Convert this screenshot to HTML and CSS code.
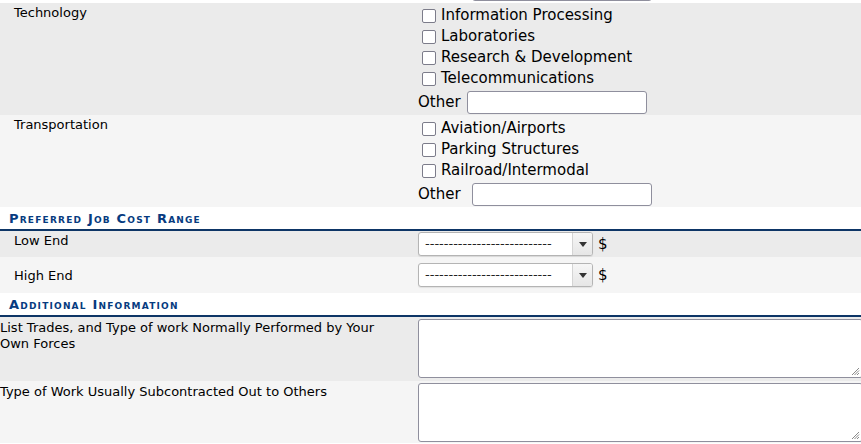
FILE: index.html
```html
<!DOCTYPE html>
<html>
<head>
<meta charset="utf-8">
<link rel="stylesheet" href="styles.css">
</head>
<body>
<div class="page">
  <div class="prev-strip"><input class="text-input prev-input" type="text"></div>

  <div class="row row-dark row-tech">
    <div class="label">Technology</div>
    <div class="field">
      <div class="check"><input type="checkbox" class="cb"><span>Information Processing</span></div>
      <div class="check"><input type="checkbox" class="cb"><span>Laboratories</span></div>
      <div class="check"><input type="checkbox" class="cb"><span>Research &amp; Development</span></div>
      <div class="check"><input type="checkbox" class="cb"><span>Telecommunications</span></div>
      <div class="other"><span>Other</span><input class="text-input other-input" type="text"></div>
    </div>
  </div>

  <div class="row row-light row-transport">
    <div class="label">Transportation</div>
    <div class="field">
      <div class="check"><input type="checkbox" class="cb"><span>Aviation/Airports</span></div>
      <div class="check"><input type="checkbox" class="cb"><span>Parking Structures</span></div>
      <div class="check"><input type="checkbox" class="cb"><span>Railroad/Intermodal</span></div>
      <div class="other"><span>Other</span><input class="text-input other-input other-wide" type="text"></div>
    </div>
  </div>

  <div class="section-head">Preferred Job Cost Range</div>

  <div class="row row-dark row-low">
    <div class="label">Low End</div>
    <div class="field field-inline">
      <div class="select"><span class="select-text">---------------------------</span><span class="select-arrow"><svg width="8" height="5" viewBox="0 0 8 5"><path d="M0 0H8L4 5Z" fill="#333"/></svg></span></div>
      <span class="dollar">$</span>
    </div>
  </div>

  <div class="row row-light row-high">
    <div class="label">High End</div>
    <div class="field field-inline">
      <div class="select"><span class="select-text">---------------------------</span><span class="select-arrow"><svg width="8" height="5" viewBox="0 0 8 5"><path d="M0 0H8L4 5Z" fill="#333"/></svg></span></div>
      <span class="dollar">$</span>
    </div>
  </div>

  <div class="section-head">Additional Information</div>

  <div class="row row-dark row-area">
    <div class="label label-flush">List Trades, and Type of work Normally Performed by Your Own Forces</div>
    <div class="field"><div class="area-wrap"><textarea class="area"></textarea><svg class="grip" width="10" height="10" viewBox="0 0 10 10"><path d="M9 2L2 9M9 4.5L4.5 9M9 7L7 9" stroke="#8a8a8a" stroke-width="1"/></svg></div></div>
  </div>

  <div class="row row-light row-area">
    <div class="label label-flush">Type of Work Usually Subcontracted Out to Others</div>
    <div class="field"><div class="area-wrap"><textarea class="area"></textarea><svg class="grip" width="10" height="10" viewBox="0 0 10 10"><path d="M9 2L2 9M9 4.5L4.5 9M9 7L7 9" stroke="#8a8a8a" stroke-width="1"/></svg></div></div>
  </div>
</div>
</body>
</html>
```

FILE: styles.css
```css
html, body {
  margin: 0;
  padding: 0;
  background: #ffffff;
  overflow: hidden;
}

.page {
  font-family: Verdana, "DejaVu Sans", sans-serif;
  color: #000;
  width: 861px;
}

.prev-strip {
  height: 3px;
  overflow: hidden;
  background: #fff;
  padding-left: 472px;
}

.text-input {
  box-sizing: border-box;
  height: 23px;
  width: 180px;
  border: 1px solid #8f8f9d;
  border-radius: 3px;
  background: #fff;
  padding: 0 4px;
  margin: 0;
  font: inherit;
}

.prev-input {
  display: block;
  margin-top: -22px;
}

.row {
  display: flex;
}

.row-dark { background: #ebebeb; }
.row-light { background: #f5f5f5; }

.label {
  box-sizing: border-box;
  width: 418px;
  flex: none;
  padding: 2px 0 0 14px;
  font-size: 13px;
  line-height: 16px;
}

.label-flush {
  padding-left: 0;
  padding-right: 18px;
}

.field {
  flex: 1;
  padding-top: 1px;
  font-size: 15px;
}

.row-tech .field { padding-top: 2px; }
.row-tech .other { height: 26px; }

.check {
  display: flex;
  align-items: center;
  height: 21px;
  line-height: 21px;
}

.cb {
  appearance: none;
  -webkit-appearance: none;
  box-sizing: border-box;
  width: 14px;
  height: 14px;
  margin: 0 5px 0 4px;
  border: 1px solid #7c7c8a;
  border-radius: 2px;
  background: #fff;
}

.other {
  display: flex;
  align-items: center;
  height: 27px;
}

.other-input {
  margin-left: 6px;
}

.other-wide {
  margin-left: 11px;
}

.row-transport .field {
  padding-top: 3px;
}
.row-transport .other {
  height: 26px;
}

.section-head {
  box-sizing: border-box;
  height: 24px;
  padding: 4px 0 0 9px;
  font-size: 13px;
  letter-spacing: 1.2px;
  line-height: 16px;
  font-weight: bold;
  font-variant: small-caps;
  color: #063b80;
  border-bottom: 2px solid #0d3566;
  background: #fff;
}

.row-low { height: 26px; }
.row-low .label { padding-top: 2px; }
.row-low .field { padding-top: 1px; }

.row-high { height: 36px; }
.row-high .label { padding-top: 11px; }
.row-high .field { padding-top: 6px; }

.field-inline {
  display: flex;
  align-items: flex-start;
}

.select {
  box-sizing: border-box;
  display: flex;
  width: 175px;
  height: 24px;
  border: 1px solid #b4b4b4;
  border-radius: 3px;
  background: #fff;
  box-shadow: 0 1px 1px rgba(0,0,0,0.08);
  overflow: hidden;
}

.select-text {
  flex: 1;
  padding-left: 6px;
  font-size: 13px;
  line-height: 21px;
  color: #222;
  overflow: hidden;
  white-space: nowrap;
}

.select-arrow {
  width: 19px;
  flex: none;
  display: flex;
  align-items: center;
  justify-content: center;
  border-left: 1px solid #d4d4d4;
  background: linear-gradient(#f6f6f6, #e6e6e6);
}

.dollar {
  margin-left: 5px;
  padding-top: 2px;
  line-height: 20px;
  font-size: 15px;
}

.row-area { height: 64px; }
.row-area:last-child { height: 62px; }
.row-area .field { padding-top: 2px; }
.row-area .label { padding-top: 3px; }

.area-wrap {
  position: relative;
  width: 445px;
}

.area {
  box-sizing: border-box;
  display: block;
  width: 445px;
  height: 59px;
  margin: 0;
  border: 1px solid #8f8f9d;
  border-radius: 3px;
  background: #fff;
  font: inherit;
  resize: none;
}

.grip {
  position: absolute;
  right: 3px;
  bottom: 2px;
}
```
